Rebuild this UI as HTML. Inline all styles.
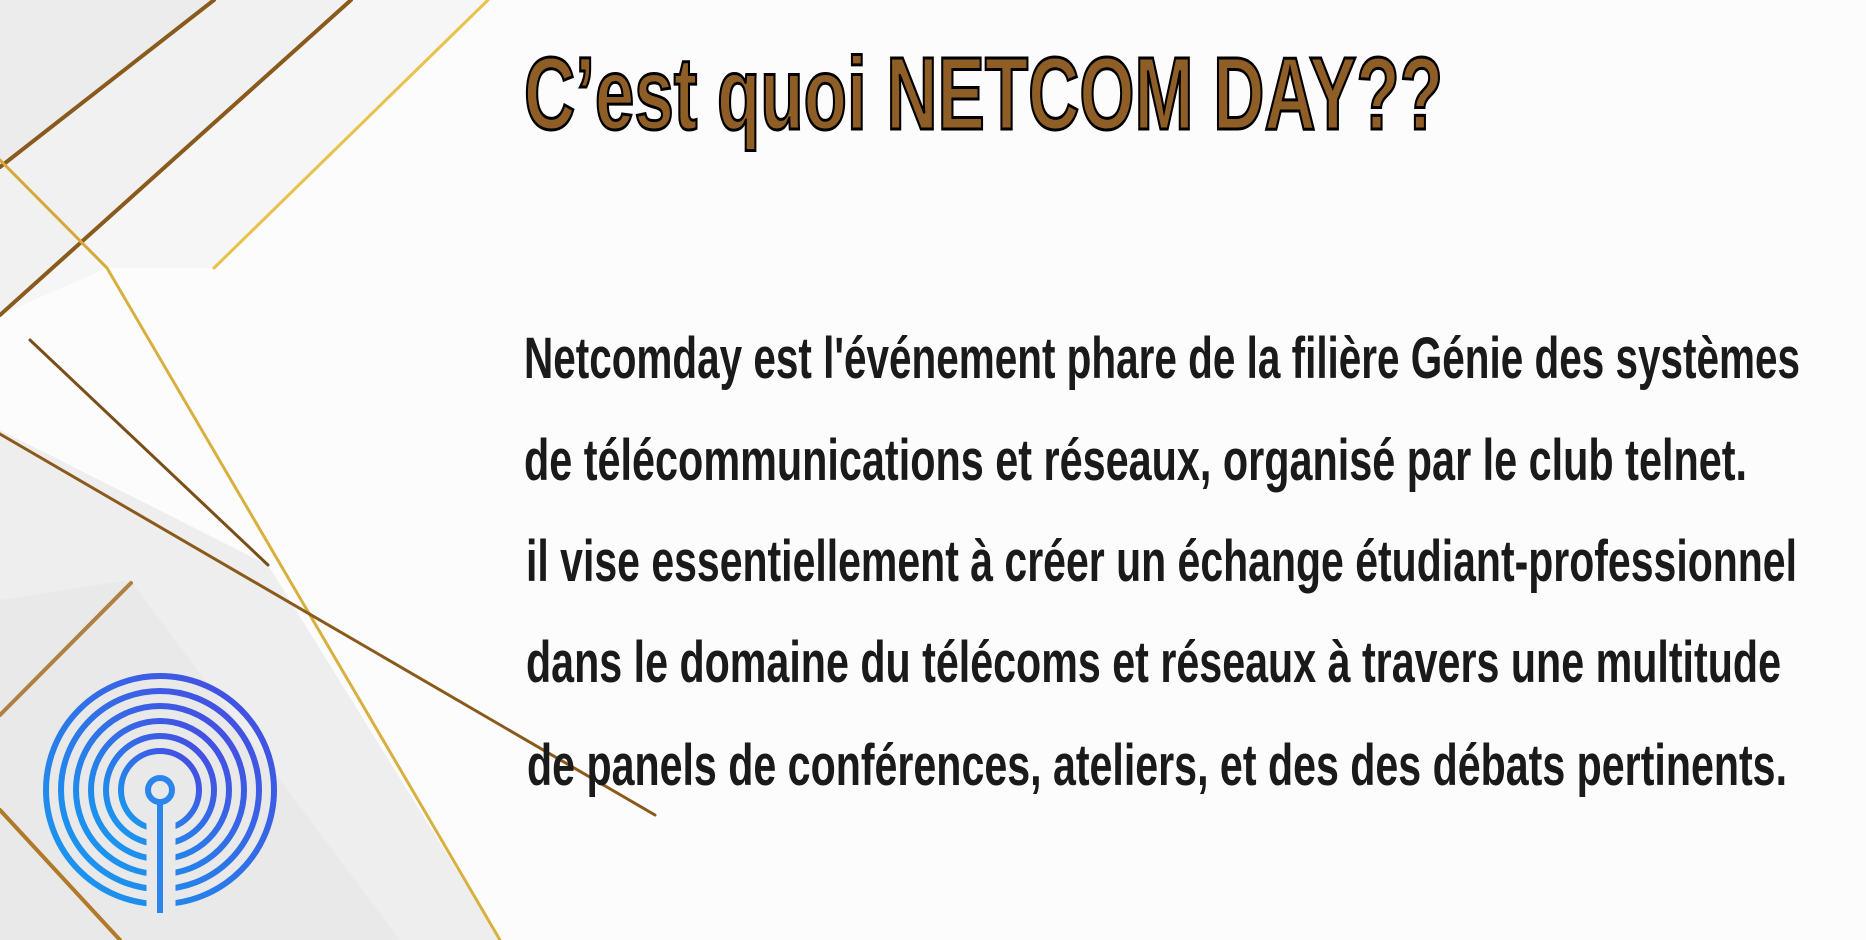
<!DOCTYPE html>
<html><head><meta charset="utf-8"><style>
html,body{margin:0;padding:0;width:1866px;height:940px;overflow:hidden;background:#fcfcfc}
svg{display:block}
</style></head><body>
<svg width="1866" height="940" viewBox="0 0 1866 940" xmlns="http://www.w3.org/2000/svg">
<defs>
<linearGradient id="g1" x1="0" y1="1" x2="1" y2="0">
<stop offset="0" stop-color="#14a0f0"/><stop offset="1" stop-color="#4a44e0"/></linearGradient>
<linearGradient id="gold" x1="0" y1="0" x2="1" y2="1">
<stop offset="0" stop-color="#8a5a1c"/><stop offset="0.5" stop-color="#e8c24a"/><stop offset="1" stop-color="#a8741e"/></linearGradient>
<mask id="m">
<rect width="1866" height="940" fill="#fff"/>
<rect x="146.5" y="800" width="29" height="140" fill="#000"/>
</mask>
</defs>
<rect width="1866" height="940" fill="#fcfcfc"/>
<polygon points="0,0 214,0 0,167" fill="#ececec"/>
<polygon points="214,0 351,0 0,315 0,167" fill="#f1f1f1"/>
<polygon points="351,0 488,0 214,268 107,268 0,315" fill="#f6f6f6"/>
<polygon points="0,430 268,565 500,940 0,940" fill="#eeeeee"/>
<polygon points="0,600 130,580 400,940 0,940" fill="#e9e9e9"/>
<g fill="none" stroke-linecap="round">
<line x1="214" y1="0" x2="0" y2="167" stroke="#8a5a1c" stroke-width="4"/>
<line x1="351" y1="0" x2="0" y2="315" stroke="#8a5a1c" stroke-width="4"/>
<line x1="488" y1="0" x2="214" y2="268" stroke="url(#gold)" stroke-width="3"/>
<line x1="0" y1="160" x2="107" y2="268" stroke="#d4a83a" stroke-width="3"/>
<line x1="107" y1="268" x2="500" y2="940" stroke="#d8b040" stroke-width="3"/>
<line x1="30" y1="340" x2="268" y2="565" stroke="#7a4e18" stroke-width="3"/>
<line x1="0" y1="434" x2="655" y2="815" stroke="#8a5a1c" stroke-width="3"/>
<line x1="0" y1="715" x2="131" y2="583" stroke="#b08040" stroke-width="4"/>
<line x1="0" y1="810" x2="120" y2="940" stroke="#b07a28" stroke-width="4"/>
</g>
<g fill="none" stroke="url(#g1)" stroke-width="6" mask="url(#m)">
<circle cx="160" cy="790" r="114"/>
<circle cx="160" cy="790" r="99"/>
<circle cx="160" cy="790" r="84"/>
<circle cx="160" cy="790" r="69"/>
<circle cx="160" cy="790" r="54"/>
<circle cx="160" cy="790" r="39"/>
</g>
<g fill="none" stroke="#2a86ec" stroke-width="6">
<circle cx="160" cy="790" r="12"/>
<line x1="160" y1="802" x2="160" y2="913"/>
</g>
<text x="524" y="129" textLength="919" lengthAdjust="spacingAndGlyphs" font-family="Liberation Sans, sans-serif" font-weight="bold" font-size="103" fill="#8f5e26" stroke="#000" stroke-width="3">C’est quoi NETCOM DAY??</text>
<g font-family="Liberation Sans, sans-serif" font-weight="bold" font-size="58" fill="#1a1a1a">
<text x="524" y="378" textLength="1276" lengthAdjust="spacingAndGlyphs">Netcomday est l'événement phare de la filière Génie des systèmes</text>
<text x="524" y="480" textLength="1223" lengthAdjust="spacingAndGlyphs">de télécommunications et réseaux, organisé par le club telnet.</text>
<text x="526" y="581" textLength="1271" lengthAdjust="spacingAndGlyphs">il vise essentiellement à créer un échange étudiant-professionnel</text>
<text x="526" y="682" textLength="1255" lengthAdjust="spacingAndGlyphs">dans le domaine du télécoms et réseaux à travers une multitude</text>
<text x="527" y="785" textLength="1260" lengthAdjust="spacingAndGlyphs">de panels de conférences, ateliers, et des des débats pertinents.</text>
</g>
</svg>
</body></html>
